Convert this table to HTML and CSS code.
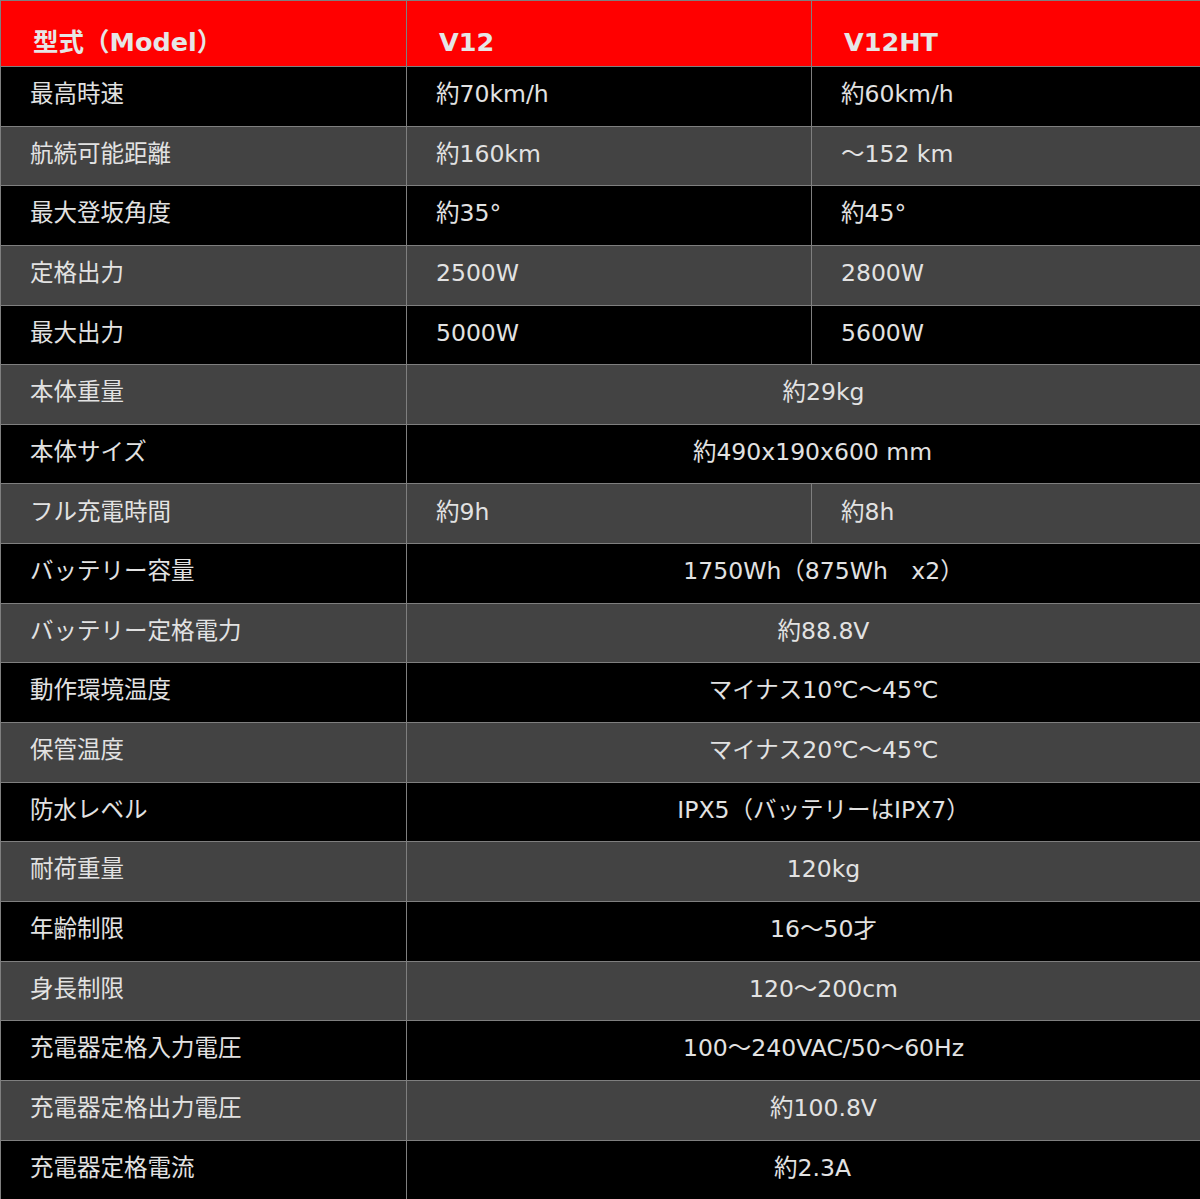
FILE: index.html
```html
<!DOCTYPE html>
<html lang="ja">
<head>
<meta charset="utf-8">
<title>スペック</title>
<link rel="stylesheet" href="styles.css">
</head>
<body>
<table class="spec">
  <colgroup><col class="c1"><col class="c2"><col class="c3"></colgroup>
  <thead>
    <tr class="head"><th>型式（Model）</th><th>V12</th><th>V12HT</th></tr>
  </thead>
  <tbody>
    <tr class="dark"><td>最高時速</td><td>約70km/h</td><td>約60km/h</td></tr>
    <tr class="gray"><td>航続可能距離</td><td>約160km</td><td>～152 km</td></tr>
    <tr class="dark"><td>最大登坂角度</td><td>約35°</td><td>約45°</td></tr>
    <tr class="gray"><td>定格出力</td><td>2500W</td><td>2800W</td></tr>
    <tr class="dark"><td>最大出力</td><td>5000W</td><td>5600W</td></tr>
    <tr class="gray"><td>本体重量</td><td colspan="2" class="mid">約29kg</td></tr>
    <tr class="dark"><td>本体サイズ</td><td colspan="2" class="mid alt">約490x190x600 mm</td></tr>
    <tr class="gray"><td>フル充電時間</td><td>約9h</td><td>約8h</td></tr>
    <tr class="dark"><td>バッテリー容量</td><td colspan="2" class="mid">1750Wh（875Wh　x2）</td></tr>
    <tr class="gray"><td>バッテリー定格電力</td><td colspan="2" class="mid">約88.8V</td></tr>
    <tr class="dark"><td>動作環境温度</td><td colspan="2" class="mid">マイナス10℃～45℃</td></tr>
    <tr class="gray"><td>保管温度</td><td colspan="2" class="mid">マイナス20℃～45℃</td></tr>
    <tr class="dark"><td>防水レベル</td><td colspan="2" class="mid">IPX5（バッテリーはIPX7）</td></tr>
    <tr class="gray"><td>耐荷重量</td><td colspan="2" class="mid">120kg</td></tr>
    <tr class="dark"><td>年齢制限</td><td colspan="2" class="mid">16～50才</td></tr>
    <tr class="gray"><td>身長制限</td><td colspan="2" class="mid">120～200cm</td></tr>
    <tr class="dark"><td>充電器定格入力電圧</td><td colspan="2" class="mid">100～240VAC/50～60Hz</td></tr>
    <tr class="gray"><td>充電器定格出力電圧</td><td colspan="2" class="mid">約100.8V</td></tr>
    <tr class="dark"><td>充電器定格電流</td><td colspan="2" class="mid alt">約2.3A</td></tr>
  </tbody>
</table>
</body>
</html>
```

FILE: styles.css
```css
html, body {
  margin: 0;
  padding: 0;
  background: #000;
}
.spec {
  width: 1200px;
  border-collapse: collapse;
  table-layout: fixed;
  font-family: "DejaVu Sans", "Noto Sans CJK JP", sans-serif;
  font-size: 23.5px;
  color: #e2e2e2;
}
.c1 { width: 406px; }
.c2 { width: 405px; }
.c3 { width: 389px; }
.spec th, .spec td {
  border: 1px solid #7f7f7f;
  padding: 0 0 3px 29px;
  text-align: left;
  vertical-align: middle;
  white-space: nowrap;
  line-height: 1;
}
.head {
  height: 66px;
  background: #ff0000;
}
.head th {
  font-weight: 700;
  font-size: 25.5px;
  padding-top: 18px;
  padding-bottom: 0;
  padding-left: 32px;
  color: #e6e6e6;
}
.spec tbody tr { height: 59.65px; }
.dark { background: #000; }
.gray { background: #434343; }
.spec td.mid {
  text-align: center;
  padding-left: 40px;
}
.spec td.mid.alt {
  padding-left: 18px;
}
```
